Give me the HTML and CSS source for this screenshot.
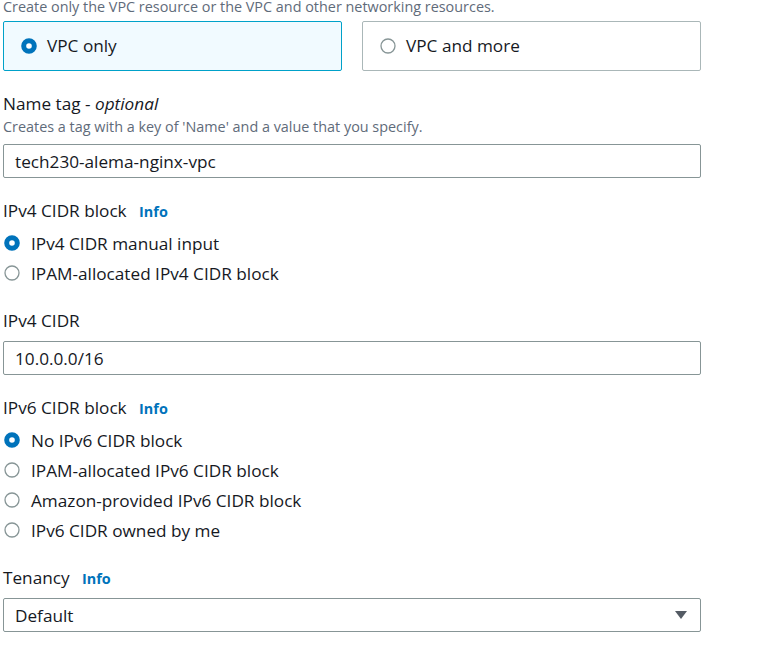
FILE: index.html
```html
<!DOCTYPE html>
<html>
<head>
<meta charset="utf-8">
<link rel="stylesheet" href="styles.css">
</head>
<body>
<div class="page">
  <div class="desc top-desc">Create only the VPC resource or the VPC and other networking resources.</div>
  <div class="tiles">
    <div class="tile selected">
      <svg class="radio" viewBox="0 0 16 16" width="16" height="16"><circle cx="8" cy="8" r="5.3" fill="#fff" stroke="#0073bb" stroke-width="5"/></svg>
      <span>VPC only</span>
    </div>
    <div class="tile">
      <svg class="radio" viewBox="0 0 16 16" width="16" height="16"><circle cx="8" cy="8" r="7" fill="#fff" stroke="#879596" stroke-width="1.3"/></svg>
      <span>VPC and more</span>
    </div>
  </div>

  <div class="field f-name">
    <div class="label">Name tag - <i>optional</i></div>
    <div class="desc sub">Creates a tag with a key of 'Name' and a value that you specify.</div>
    <div class="input in-name">tech230-alema-nginx-vpc</div>
  </div>

  <div class="field f-gap">
    <div class="label">IPv4 CIDR block <span class="info">Info</span></div>
    <div class="radios">
      <div class="opt"><svg class="radio" viewBox="0 0 16 16" width="16" height="16"><circle cx="8" cy="8" r="5.3" fill="#fff" stroke="#0073bb" stroke-width="5"/></svg><span>IPv4 CIDR manual input</span></div>
      <div class="opt"><svg class="radio" viewBox="0 0 16 16" width="16" height="16"><circle cx="8" cy="8" r="7" fill="#fff" stroke="#879596" stroke-width="1.3"/></svg><span>IPAM-allocated IPv4 CIDR block</span></div>
    </div>
  </div>

  <div class="field f-gap2">
    <div class="label">IPv4 CIDR</div>
    <div class="input in-cidr">10.0.0.0/16</div>
  </div>

  <div class="field f-gap">
    <div class="label">IPv6 CIDR block <span class="info">Info</span></div>
    <div class="radios">
      <div class="opt"><svg class="radio" viewBox="0 0 16 16" width="16" height="16"><circle cx="8" cy="8" r="5.3" fill="#fff" stroke="#0073bb" stroke-width="5"/></svg><span>No IPv6 CIDR block</span></div>
      <div class="opt"><svg class="radio" viewBox="0 0 16 16" width="16" height="16"><circle cx="8" cy="8" r="7" fill="#fff" stroke="#879596" stroke-width="1.3"/></svg><span>IPAM-allocated IPv6 CIDR block</span></div>
      <div class="opt"><svg class="radio" viewBox="0 0 16 16" width="16" height="16"><circle cx="8" cy="8" r="7" fill="#fff" stroke="#879596" stroke-width="1.3"/></svg><span>Amazon-provided IPv6 CIDR block</span></div>
      <div class="opt"><svg class="radio" viewBox="0 0 16 16" width="16" height="16"><circle cx="8" cy="8" r="7" fill="#fff" stroke="#879596" stroke-width="1.3"/></svg><span>IPv6 CIDR owned by me</span></div>
    </div>
  </div>

  <div class="field f-gap">
    <div class="label">Tenancy <span class="info">Info</span></div>
    <div class="input select">
      <span>Default</span>
      <svg class="caret" viewBox="0 0 12 8" width="12" height="8"><path d="M0 0h12L6 8z" fill="#545b64"/></svg>
    </div>
  </div>
</div>
</body>
</html>
```

FILE: styles.css
```css
* { box-sizing: border-box; }
html, body { margin: 0; padding: 0; background: #fff; }
body {
  font-family: "Open Sans", "Noto Sans", Arial, sans-serif;
  color: #16191f;
  font-size: 17.2px;
}
.page {
  width: 701px;
  padding-left: 3px;
  overflow: hidden;
}
.desc {
  font-size: 14.4px;
  line-height: 18px;
  color: #5f6b7a;
}
.top-desc {
  line-height: 14px;
  height: 14px;
  white-space: nowrap;
}
.sub {
  margin-top: 2px;
  line-height: 20px;
}
.tiles {
  display: grid;
  grid-template-columns: 339px 339px;
  column-gap: 20px;
  margin-top: 7px;
}
.tile {
  height: 50px;
  border: 1px solid #aab7b8;
  border-radius: 2px;
  display: flex;
  align-items: center;
  gap: 10px;
  padding-left: 17px;
  padding-bottom: 2px;
  font-size: 17.2px;
}
.tile .radio { margin-top: 1px; }
.tile.selected {
  background: #f1faff;
  border-color: #00a1c9;
}
.radio { flex: none; display: block; }
.field { display: flex; flex-direction: column; }
.f-name { margin-top: 22px; }
.f-gap { margin-top: 22px; }
.f-gap2 { margin-top: 22px; }
.label {
  line-height: 22px;
  font-size: 17.2px;
}
.label i { font-style: italic; }
.info {
  font-size: 14.4px;
  font-weight: 700;
  color: #0073bb;
  margin-left: 8px;
}
.input {
  height: 34px;
  border: 1px solid #879596;
  border-radius: 2px;
  display: flex;
  align-items: center;
  padding-left: 11px;
  padding-right: 13px;
  font-size: 17.2px;
}
.in-name { margin-top: 7px; }
.in-cidr { margin-top: 9px; }
.select { margin-top: 8px; justify-content: space-between; }
.caret { display: block; }
.radios { margin-top: 5px; display: flex; flex-direction: column; }
.opt {
  height: 30px;
  display: flex;
  align-items: center;
  gap: 11px;
  padding-left: 1px;
  font-size: 17.2px;
}
```
